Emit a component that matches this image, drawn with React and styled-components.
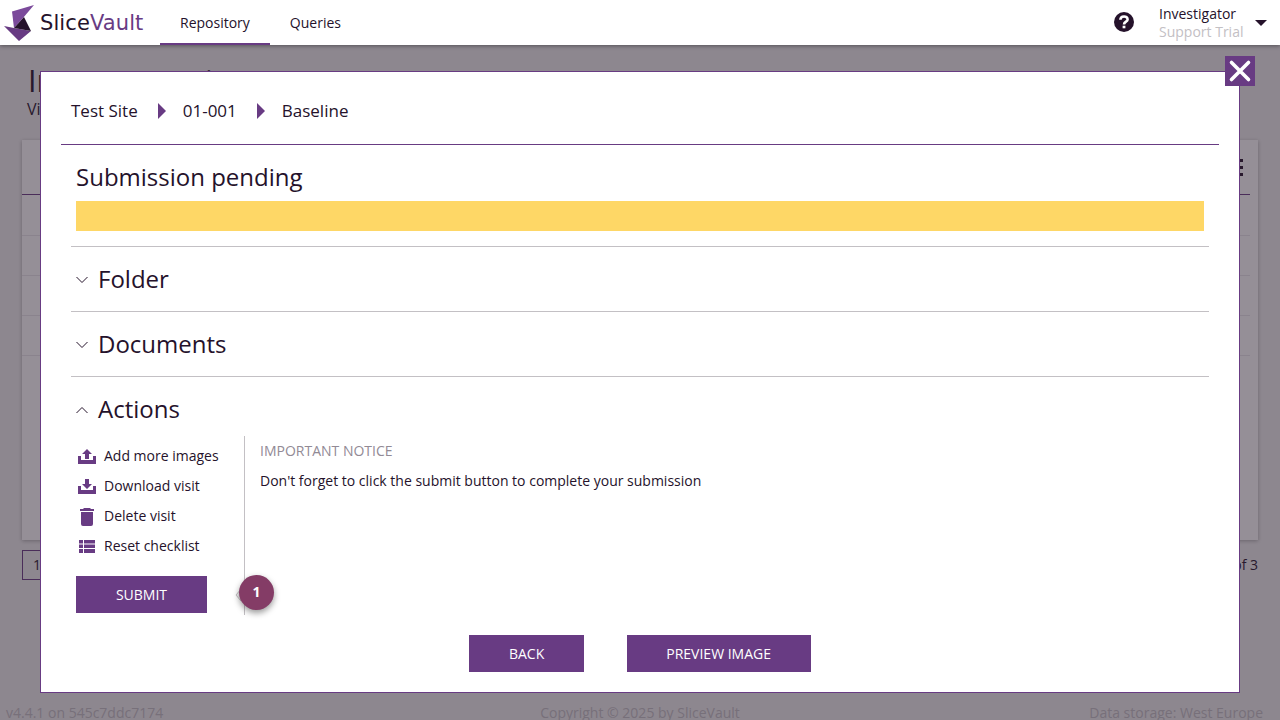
import React, { useState } from "react";
import styled, { createGlobalStyle } from "styled-components";

const GlobalStyle = createGlobalStyle`
    * {
        box-sizing: border-box;
    }

    body {
        margin: 0;
        background: #efefef;
        color: #25122b;
        font-family: "Open Sans", "Noto Sans", sans-serif;
        font-size: 14px;
        line-height: 20px;
        overflow: hidden;
    }
`;

const Wrapper = styled.div`
    height: 720px;
    display: flex;
    flex-direction: column;
    overflow: hidden;
`;

const Header = styled.header`
    position: relative;
    z-index: 3;
    flex: none;
    height: 45px;
    display: flex;
    background: #fff;
    box-shadow: 0 1px 4px rgba(0, 0, 0, 0.4);
`;

const Logo = styled.div`
    width: 160px;
    display: flex;
    align-items: flex-start;
    padding: 4px 0 0 4px;
`;

const LogoText = styled.span`
    margin-left: 5px;
    font-family: "DejaVu Sans", sans-serif;
    font-size: 21px;
    line-height: 38px;
    letter-spacing: 0.1px;

    b {
        font-weight: 400;
        color: #683b83;
    }
`;

const NavItem = styled.a`
    padding: 13px 20px 0;
    border-bottom: 2px solid ${(props) => (props.$active ? "#683b83" : "transparent")};
`;

const HeaderRight = styled.div`
    margin-left: auto;
    display: flex;
    align-items: flex-start;
`;

const HelpIcon = styled.svg`
    margin: 12px 25px 0 0;
`;

const User = styled.div`
    width: 96px;
    padding-top: 5px;
    line-height: 18px;
`;

const Trial = styled.div`
    color: #c3c0c4;
`;

const Caret = styled.svg`
    margin: 20px 13px 0 0;
`;

const Page = styled.main`
    flex: 1;
    padding: 15px 22px 0;
`;

const PageTitle = styled.h1`
    margin: 0;
    padding-left: 6px;
    font-size: 30.6px;
    font-weight: 400;
    line-height: 41px;
`;

const PageSubtitle = styled.div`
    height: 39px;
    padding-left: 5px;
    font-size: 16px;
    line-height: 16px;
`;

const Card = styled.div`
    height: 400px;
    background: #fff;
    box-shadow: 0 1px 4px rgba(0, 0, 0, 0.3);
`;

const CardHead = styled.div`
    width: 1228px;
    height: 55px;
    display: flex;
    justify-content: flex-end;
    padding: 18px 6px 0 0;
    border-bottom: 1px solid #683b83;
`;

const CardRow = styled.div`
    height: ${(props) => (props.$first ? 41 : 40)}px;
    width: 1228px;
    border-bottom: 1px solid #e9e7ea;
`;

const Pager = styled.div`
    display: flex;
    justify-content: space-between;
    margin-top: 10px;
    line-height: 30px;
`;

const PageNumber = styled.div`
    width: 60px;
    height: 30px;
    padding-left: 10px;
    border: 1px solid #683b83;
    line-height: 28px;
`;

const Footer = styled.footer`
    height: 17px;
    flex: none;
    display: grid;
    grid-template-columns: 1fr auto 1fr;
    padding: 0 17px 0 6px;
    color: #c3c0c4;

    span:nth-child(2) {
        padding-left: 11px;
    }

    span:last-child {
        text-align: right;
    }
`;

const Overlay = styled.div`
    position: absolute;
    inset: 45px 0 0;
    height: 675px;
    z-index: 2;
    padding: 26px 40px 27px;
    background: rgba(43, 31, 47, 0.5);
`;

const Modal = styled.section`
    position: relative;
    height: 622px;
    display: flex;
    flex-direction: column;
    padding: 0 20px;
    border: 1px solid #683b83;
    background: #fff;
`;

const CloseButton = styled.button`
    position: absolute;
    top: -16px;
    right: -16px;
    width: 30px;
    height: 30px;
    padding: 0;
    border: 0;
    background: #683b83;

    svg {
        display: block;
    }
`;

const Breadcrumbs = styled.nav`
    height: 73px;
    display: flex;
    align-items: center;
    padding: 6px 10px 0;
    border-bottom: 1px solid #683b83;
    font-size: 17px;
    line-height: 22px;
`;

const Arrow = styled.svg`
    margin: 0 17px 0 20px;
`;

const Content = styled.div`
    flex: 1;
    padding: 0 10px;
`;

const Status = styled.div`
    height: 101px;
    padding: 15px 5px 0;
`;

const StatusTitle = styled.h2`
    margin: 0;
    font-size: 24px;
    font-weight: 400;
    line-height: 33px;
`;

const StatusBar = styled.div`
    height: 30px;
    margin-top: 8px;
    background: #fed766;
`;

const SectionHead = styled.h2`
    height: ${(props) => (props.$open ? 59 : 64)}px;
    margin: 0;
    display: flex;
    align-items: flex-start;
    padding: 15px 5px 0;
    font-size: 24px;
    font-weight: 400;
    line-height: 33px;
    cursor: pointer;

    svg {
        margin: 14px 10px 0 0;
    }
`;

const Section = styled.div`
    border-top: 1px solid #c3c0c4;
`;

const SectionBody = styled.div`
    display: flex;
`;

const ActionColumn = styled.div`
    width: 174px;
    height: 179px;
    padding: 5px 0 0 5px;
    border-right: 1px solid #c3c0c4;
`;

const Action = styled.div`
    height: 30px;
    display: flex;
    align-items: center;

    svg {
        margin: 1px 7px 0 1px;
    }
`;

const Button = styled.button`
    height: 37px;
    padding: 0 39.5px;
    border: 0;
    background: #683b83;
    color: #fff;
    font: inherit;
`;

const SubmitButton = styled(Button)`
    padding: 0 39.9px;
`;

const SubmitLine = styled.div`
    position: relative;
    margin-top: 15px;
`;

const Marker = styled.div`
    position: absolute;
    left: 163px;
    top: -1px;
    width: 35px;
    height: 35px;
    border-radius: 50%;
    background: #843c66;
    box-shadow: 0 3px 6px rgba(0, 0, 0, 0.4);
    color: #fff;
    font-weight: 700;
    line-height: 34px;
    text-align: center;
`;

const MarkerTip = styled.svg`
    position: absolute;
    left: 159px;
    top: 13px;
`;

const Notice = styled.div`
    padding: 5px 15px;
`;

const NoticeTitle = styled.div`
    margin-bottom: 10px;
    color: #928a95;
`;

const Buttons = styled.div`
    display: flex;
    justify-content: center;
    gap: 43px;
    padding-bottom: 20px;
`;

const purple = "#683b83";

const icons = {
    upload: <path fill={purple} d="M9 0L14 5H11V10H7V5H4ZM0 7H3V11H15V7H18V15H0Z" />,
    download: <path fill={purple} d="M7 0H11V5H14L9 10L4 5H7ZM0 7H3V11H15V7H18V15H0Z" />,
    trash: <path fill={purple} d="M6 1H12L13 2H16V4H2V2H5ZM3 5H15V17Q15 19 13 19H5Q3 19 3 17Z" />,
    list: (
        <path
            fill={purple}
            d="M1 1H5V4.5H1ZM6 1H17V4.5H6ZM1 5.5H5V9H1ZM6 5.5H17V9H6ZM1 10H5V14H1ZM6 10H17V14H6Z"
        />
    ),
};

const actions = [
    { icon: "upload", height: 15, text: "Add more images" },
    { icon: "download", height: 15, text: "Download visit" },
    { icon: "trash", height: 19, text: "Delete visit" },
    { icon: "list", height: 15, text: "Reset checklist" },
];

function Chevron({ open }) {
    return (
        <svg width="12" height="8" viewBox="0 0 12 8">
            <path
                d={open ? "M0.5 7L6 1.5L11.5 7" : "M0.5 1L6 6.5L11.5 1"}
                fill="none"
                stroke="#25122b"
                strokeWidth="1"
            />
        </svg>
    );
}

function Separator() {
    return (
        <Arrow width="8" height="16" viewBox="0 0 8 16">
            <path d="M0 0L8 8L0 16Z" fill={purple} />
        </Arrow>
    );
}

function TopBar() {
    return (
        <Header>
            <Logo>
                <svg width="31" height="38" viewBox="0 0 31 38">
                    <path d="M8 7.5L30 1L19 14L10 24Z" fill="#7b4a9b" />
                    <path d="M0 22L10 24L27 27L15 37Z" fill={purple} />
                    <path d="M20 13L27 27L10 24Z" fill="#25122b" />
                </svg>
                <LogoText>
                    Slice<b>Vault</b>
                </LogoText>
            </Logo>
            <NavItem $active>Repository</NavItem>
            <NavItem>Queries</NavItem>
            <HeaderRight>
                <HelpIcon width="20" height="20" viewBox="0 0 20 20">
                    <circle cx="10" cy="10" r="10" fill="#25122b" />
                    <path
                        d="M6.4 7.8C6.4 3.4 13.6 3.4 13.6 7.4C13.6 9.8 10 9.6 10 12.6"
                        fill="none"
                        stroke="#fff"
                        strokeWidth="2.6"
                    />
                    <rect x="8.6" y="13.7" width="2.8" height="2.6" fill="#fff" />
                </HelpIcon>
                <User>
                    Investigator
                    <Trial>Support Trial</Trial>
                </User>
                <Caret width="12" height="6" viewBox="0 0 12 6">
                    <path d="M0 0H12L6 6Z" fill="#25122b" />
                </Caret>
            </HeaderRight>
        </Header>
    );
}

function App() {
    const [open, setOpen] = useState("Actions");

    return (
        <Wrapper>
            <GlobalStyle />
            <TopBar />
            <Page>
                <PageTitle>Image repository</PageTitle>
                <PageSubtitle>Visits</PageSubtitle>
                <Card>
                    <CardHead>
                        <svg width="7" height="19" viewBox="0 0 7 19">
                            <path d="M0 1H6V4H0ZM0 8H6V11H0ZM0 15H6V18H0Z" fill="#25122b" />
                        </svg>
                    </CardHead>
                    <CardRow $first />
                    <CardRow />
                    <CardRow />
                    <CardRow />
                </Card>
                <Pager>
                    <PageNumber>1</PageNumber>
                    <div>1 - 3 of 3</div>
                </Pager>
            </Page>
            <Footer>
                <span>v4.4.1 on 545c7ddc7174</span>
                <span>Copyright © 2025 by SliceVault</span>
                <span>Data storage: West Europe</span>
            </Footer>
            <Overlay>
                <Modal>
                    <CloseButton>
                        <svg width="30" height="30" viewBox="0 0 30 30">
                            <path
                                d="M6.5 6.5L23.5 23.5M23.5 6.5L6.5 23.5"
                                stroke="#fff"
                                strokeWidth="3.6"
                                strokeLinecap="round"
                            />
                        </svg>
                    </CloseButton>
                    <Breadcrumbs>
                        Test Site
                        <Separator />
                        01-001
                        <Separator />
                        Baseline
                    </Breadcrumbs>
                    <Content>
                        <Status>
                            <StatusTitle>Submission pending</StatusTitle>
                            <StatusBar />
                        </Status>
                        {["Folder", "Documents", "Actions"].map((name) => (
                            <Section key={name}>
                                <SectionHead $open={open === name} onClick={() => setOpen(name)}>
                                    <Chevron open={open === name} />
                                    {name}
                                </SectionHead>
                            </Section>
                        ))}
                        {open === "Actions" && (
                            <SectionBody>
                                <ActionColumn>
                                    {actions.map((action) => (
                                        <Action key={action.text}>
                                            <svg
                                                width="20"
                                                height={action.height}
                                                viewBox={`-1 0 20 ${action.height}`}
                                            >
                                                {icons[action.icon]}
                                            </svg>
                                            {action.text}
                                        </Action>
                                    ))}
                                    <SubmitLine>
                                        <SubmitButton>SUBMIT</SubmitButton>
                                        <MarkerTip width="6" height="12" viewBox="0 0 6 12">
                                            <path d="M6 0L1 6L6 12" fill="#eee" stroke="#c3c0c4" />
                                        </MarkerTip>
                                        <Marker>1</Marker>
                                    </SubmitLine>
                                </ActionColumn>
                                <Notice>
                                    <NoticeTitle>IMPORTANT NOTICE</NoticeTitle>
                                    Don't forget to click the submit button to complete your submission
                                </Notice>
                            </SectionBody>
                        )}
                    </Content>
                    <Buttons>
                        <Button>BACK</Button>
                        <Button>PREVIEW IMAGE</Button>
                    </Buttons>
                </Modal>
            </Overlay>
        </Wrapper>
    );
}

export default App;
